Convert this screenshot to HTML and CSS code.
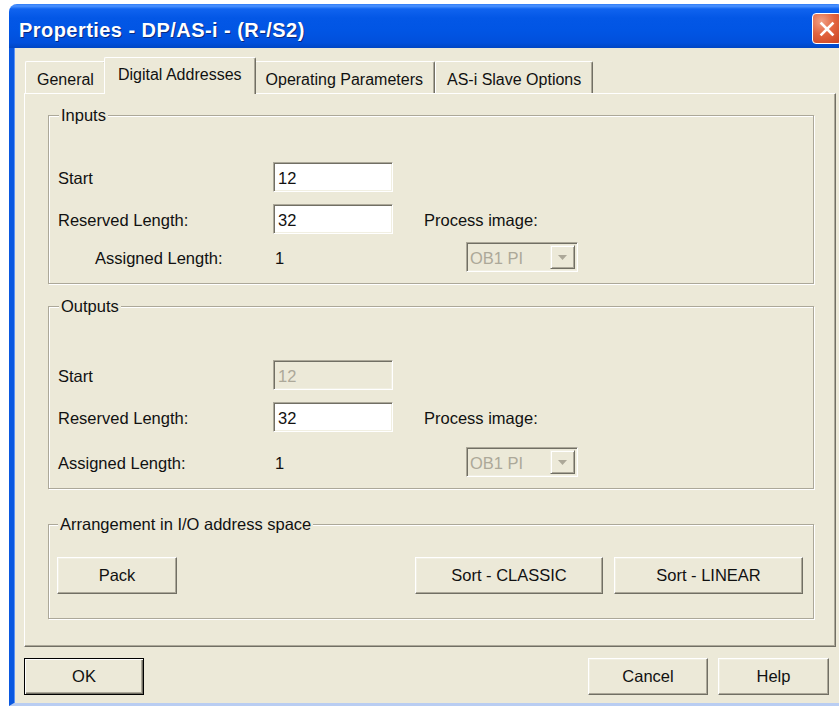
FILE: index.html
```html
<!DOCTYPE html>
<html lang="en">
<head>
<meta charset="utf-8">
<title>Properties - DP/AS-i - (R-/S2)</title>
<link rel="stylesheet" href="styles.css">
</head>
<body>
<div class="window">
  <div class="titlebar">
    <span class="title">Properties - DP/AS-i - (R-/S2)</span>
    <span class="close" aria-label="Close">
      <svg width="16" height="16" viewBox="0 0 16 16"><path d="M2.5 2.5 L13.5 13.5 M13.5 2.5 L2.5 13.5" stroke="#fff" stroke-width="2.6" stroke-linecap="square"/></svg>
    </span>
  </div>
  <div class="client">
    <div class="tabs">
      <div class="tab">General</div>
      <div class="tab active">Digital Addresses</div>
      <div class="tab">Operating Parameters</div>
      <div class="tab">AS-i Slave Options</div>
    </div>
    <div class="panel">
      <div class="group group-inputs">
        <div class="group-title">Inputs</div>
        <div class="row row-first">
          <span class="label">Start</span>
          <span class="field">12</span>
        </div>
        <div class="row row-second">
          <span class="label">Reserved Length:</span>
          <span class="field">32</span>
          <span class="aside">Process image:</span>
        </div>
        <div class="row row-third">
          <span class="label indent">Assigned Length:</span>
          <span class="value">1</span>
          <span class="combo"><span class="combo-text">OB1 PI</span><span class="combo-btn"><svg width="9" height="5" viewBox="0 0 9 5"><path d="M0 0 H9 L4.5 5 Z" fill="#ACA899"/></svg></span></span>
        </div>
      </div>

      <div class="group group-outputs">
        <div class="group-title">Outputs</div>
        <div class="row row-first">
          <span class="label">Start</span>
          <span class="field disabled">12</span>
        </div>
        <div class="row row-second">
          <span class="label">Reserved Length:</span>
          <span class="field">32</span>
          <span class="aside">Process image:</span>
        </div>
        <div class="row row-third">
          <span class="label">Assigned Length:</span>
          <span class="value">1</span>
          <span class="combo"><span class="combo-text">OB1 PI</span><span class="combo-btn"><svg width="9" height="5" viewBox="0 0 9 5"><path d="M0 0 H9 L4.5 5 Z" fill="#ACA899"/></svg></span></span>
        </div>
      </div>

      <div class="group group-arrange">
        <div class="group-title">Arrangement in I/O address space</div>
        <div class="button-row">
          <button class="btn btn-pack">Pack</button>
          <div class="sort-buttons">
            <button class="btn btn-classic">Sort - CLASSIC</button>
            <button class="btn btn-linear">Sort - LINEAR</button>
          </div>
        </div>
      </div>
    </div>
    <div class="footer">
      <button class="btn btn-dialog default">OK</button>
      <div class="footer-right">
        <button class="btn btn-dialog">Cancel</button>
        <button class="btn btn-help">Help</button>
      </div>
    </div>
  </div>
</div>
</body>
</html>
```

FILE: styles.css
```css
html, body {
  margin: 0;
  padding: 0;
  background: #fff;
  overflow: hidden;
}

body {
  font-family: "Liberation Sans", Arial, sans-serif;
  font-size: 16.5px;
  color: #111;
}

.window {
  margin: 4px 0 0 9px;
  width: 836px;
}

/* Luna title bar */
.titlebar {
  height: 44px;
  display: flex;
  align-items: center;
  border-radius: 8px 8px 0 0;
  background: linear-gradient(#2f7bf5 0, #4c93ff 2px, #1063ef 5px, #0357e6 14px, #0155e4 60%, #0150dc 88%, #0046c4 100%);
  padding-left: 10px;
  box-sizing: border-box;
}

.title {
  color: #fff;
  font-weight: bold;
  font-size: 20px;
  letter-spacing: 0.45px;
  text-shadow: 1px 1px 0 #0a2a80;
  margin-top: 8px;
}

.close {
  margin-left: auto;
  margin-right: 3px;
  margin-top: 5px;
  width: 28px;
  height: 29px;
  border: 1px solid #fff;
  border-radius: 4px;
  background: radial-gradient(circle at 30% 25%, #f0a085 0, #e2643f 45%, #c8401f 100%);
  display: flex;
  align-items: center;
  justify-content: center;
}

.client {
  background: #ece9d8;
  border-left: 5px solid #0a58e0;
  box-shadow: inset 1px 0 0 #5c93f5;
  padding: 9px 0 8px 10px;
  border-bottom: 3px solid #b9cdf2;
}

/* tab strip */
.tabs {
  display: flex;
  align-items: flex-end;
  height: 36px;
  padding-left: 1px;
  font-size: 16px;
}

.tab {
  height: 32px;
  box-sizing: border-box;
  padding: 4px 11px 0;
  display: flex;
  align-items: center;
  border-top: 1px solid #fff;
  border-left: 1px solid #fff;
  border-right: 1px solid #716f64;
  box-shadow: inset -1px 0 0 #aca899;
  border-radius: 2px 2px 0 0;
  background: #ece9d8;
  white-space: nowrap;
}

.tab.active {
  height: 37px;
  margin: 0 -2px -1px -2px;
  padding: 0 13px 2px;
  position: relative;
  z-index: 1;
}

.panel {
  width: 812px;
  height: 554px;
  box-sizing: border-box;
  border-top: 1px solid #fff;
  border-left: 1px solid #fff;
  border-right: 1px solid #716f64;
  border-bottom: 1px solid #716f64;
  box-shadow: inset -1px -1px 0 #aca899;
  padding: 0 21px 0 23px;
}

/* etched group boxes */
.group {
  border: 1px solid #aca899;
  box-shadow: inset 1px 1px 0 #fff, 1px 1px 0 #fff;
  padding: 0 9px 11px;
}

.group-title {
  display: table;
  margin: -10px 0 0 1px;
  padding: 0 2px;
  line-height: 19px;
  background: #ece9d8;
}

.group-inputs { margin-top: 21px; }
.group-outputs { margin-top: 22px; }
.group-arrange { margin-top: 35px; padding-bottom: 24px; padding-right: 10px; padding-left: 8px; }

.row {
  display: flex;
  align-items: center;
  height: 30px;
}

.group-inputs .row-first { margin-top: 37px; }
.group-inputs .row-second { margin-top: 12px; }
.group-inputs .row-third { margin-top: 8px; }

.group-outputs .row-first { margin-top: 44px; }
.group-outputs .row-second { margin-top: 12px; }
.group-outputs .row-third { margin-top: 15px; }

.label {
  width: 215px;
  flex: none;
  box-sizing: border-box;
  padding-top: 2px;
}

.label.indent { padding-left: 37px; }

.field {
  width: 120px;
  height: 30px;
  box-sizing: border-box;
  background: #fff;
  border: 1px solid;
  border-color: #aca899 #fff #fff #aca899;
  box-shadow: inset 1px 1px 0 #716f64, inset -1px -1px 0 #f1efe2;
  padding: 2px 0 0 4px;
  display: flex;
  align-items: center;
}

.field.disabled {
  background: #ece9d8;
  color: #aca899;
}

.aside { margin-left: 31px; padding-top: 2px; }

.value {
  width: 151px;
  padding: 2px 0 0 2px;
  box-sizing: border-box;
  flex: none;
}

.combo {
  margin-left: 42px;
  width: 112px;
  height: 30px;
  box-sizing: border-box;
  border: 1px solid;
  border-color: #aca899 #fff #fff #aca899;
  box-shadow: inset 1px 1px 0 #716f64, inset -1px -1px 0 #f1efe2;
  display: flex;
  align-items: center;
  padding: 2px 2px 2px 3px;
  color: #aca899;
}

.combo-text { flex: 1; padding-top: 2px; }

.combo-btn {
  width: 25px;
  height: 24px;
  box-sizing: border-box;
  border: 1px solid;
  border-color: #f1efe2 #716f64 #716f64 #f1efe2;
  box-shadow: inset 1px 1px 0 #fff, inset -1px -1px 0 #aca899;
  display: flex;
  align-items: center;
  justify-content: center;
}

/* classic push buttons */
.btn {
  font: inherit;
  color: #111;
  background: #ece9d8;
  height: 37px;
  box-sizing: border-box;
  border: 1px solid;
  border-color: #fff #716f64 #716f64 #fff;
  box-shadow: inset -1px -1px 0 #aca899, inset 1px 1px 0 #f1efe2;
  padding: 0;
  margin: 0;
}

.button-row {
  display: flex;
  justify-content: space-between;
  margin-top: 23px;
}

.btn-pack { width: 120px; }
.btn-classic { width: 188px; }
.btn-linear { width: 189px; }

.sort-buttons {
  display: flex;
  gap: 11px;
}

.footer {
  width: 812px;
  display: flex;
  justify-content: space-between;
  margin-top: 11px;
  padding-right: 7px;
  box-sizing: border-box;
}

.footer-right {
  display: flex;
  gap: 10px;
}

.btn-dialog { width: 120px; }
.btn-help { width: 111px; }

.btn.default {
  border: 1px solid #000;
  box-shadow: inset 1px 1px 0 #fff, inset -1px -1px 0 #716f64, inset -2px -2px 0 #aca899;
}
```
